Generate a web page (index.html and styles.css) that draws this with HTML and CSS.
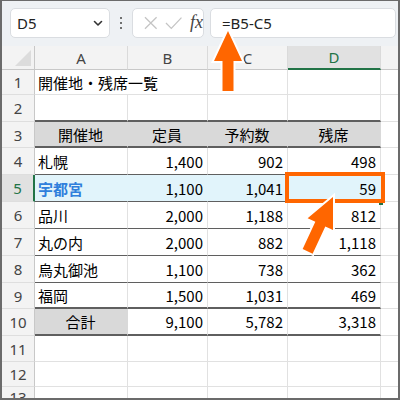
FILE: index.html
```html
<!DOCTYPE html>
<html lang="ja">
<head>
<meta charset="utf-8">
<link rel="stylesheet" href="styles.css">
</head>
<body>
<div class="frame">
  <div class="toolbar">
    <div class="namebox">
      <span class="nb-text">D5</span>
      <svg class="chev" width="10" height="7" viewBox="0 0 10 7"><path d="M1.5 1.5 L5 5 L8.5 1.5" fill="none" stroke="#333" stroke-width="1.6" stroke-linecap="round" stroke-linejoin="round"/></svg>
    </div>
    <div class="dots"><span></span><span></span><span></span></div>
    <div class="fxbox">
      <svg width="14" height="14" viewBox="0 0 14 14"><path d="M1 1 L13 13 M13 1 L1 13" stroke="#c4c4c4" stroke-width="1.3" fill="none"/></svg>
      <svg width="18" height="14" viewBox="0 0 18 14"><path d="M1 7 L6.5 12.5 L17 1.5" stroke="#c4c4c4" stroke-width="1.3" fill="none"/></svg>
      <span class="fx">fx</span>
    </div>
    <div class="formula">=B5-C5</div>
  </div>
  <div class="sheet">
    <div class="corner"><svg width="20" height="20" viewBox="0 0 20 20"><path d="M19 3 L19 19 L3 19 Z" fill="#dcdcdc"/></svg></div>
    <div class="ch">A</div><div class="ch">B</div><div class="ch">C</div><div class="ch chs">D</div><div class="ch che"></div>

    <div class="rh">1</div><div class="c span2">開催地・残席一覧</div><div class="c"></div><div class="c"></div><div class="c e"></div>
    <div class="rh">2</div><div class="c tk"></div><div class="c tk"></div><div class="c tk"></div><div class="c tk"></div><div class="c e"></div>
    <div class="rh">3</div><div class="c hd tk ctr">開催地</div><div class="c hd tk ctr">定員</div><div class="c hd tk ctr">予約数</div><div class="c hd tk ctr">残席</div><div class="c e"></div>
    <div class="rh">4</div><div class="c t">札幌</div><div class="c t r">1,400</div><div class="c t r">902</div><div class="c t r">498</div><div class="c e"></div>
    <div class="rh rhs">5</div><div class="c t sel blue">宇都宮</div><div class="c t sel r">1,100</div><div class="c t sel r">1,041</div><div class="c t sel r">59</div><div class="c e"></div>
    <div class="rh">6</div><div class="c t">品川</div><div class="c t r">2,000</div><div class="c t r">1,188</div><div class="c t r">812</div><div class="c e"></div>
    <div class="rh">7</div><div class="c t">丸の内</div><div class="c t r">2,000</div><div class="c t r">882</div><div class="c t r">1,118</div><div class="c e"></div>
    <div class="rh">8</div><div class="c t">烏丸御池</div><div class="c t r">1,100</div><div class="c t r">738</div><div class="c t r">362</div><div class="c e"></div>
    <div class="rh">9</div><div class="c tk">福岡</div><div class="c tk r">1,500</div><div class="c tk r">1,031</div><div class="c tk r">469</div><div class="c e"></div>
    <div class="rh">10</div><div class="c hd tk ctr">合計</div><div class="c tk r">9,100</div><div class="c tk r">5,782</div><div class="c tk r">3,318</div><div class="c e"></div>
    <div class="rh">11</div><div class="c"></div><div class="c"></div><div class="c"></div><div class="c"></div><div class="c e"></div>
    <div class="rh">12</div><div class="c"></div><div class="c"></div><div class="c"></div><div class="c"></div><div class="c e"></div>
    <div class="rh">13</div><div class="c"></div><div class="c"></div><div class="c"></div><div class="c"></div><div class="c e"></div>
  </div>
  <div class="handle"></div>
  <div class="selbox"></div>
  <svg class="overlay" width="400" height="400" viewBox="0 0 400 400">
    <g transform="translate(228,31)">
      <polygon class="arrow" points="0,0 14,30 5.5,30 5.5,60 -5.5,60 -5.5,30 -14,30"/>
    </g>
    <g transform="translate(333,197) rotate(25)">
      <polygon class="arrow" points="0,0 14,30 5.5,30 5.5,60 -5.5,60 -5.5,30 -14,30"/>
    </g>
  </svg>
</div>
</body>
</html>
```
FILE: styles.css
```css
* { box-sizing: border-box; }
html, body { margin: 0; padding: 0; background: #fff; }
body { font-family: "Noto Sans CJK JP", "Noto Sans", sans-serif; }

.frame {
  position: relative;
  width: 400px;
  height: 400px;
  border: 2px solid #6b6b6b;
  border-top-width: 1px;
  overflow: hidden;
  display: flex;
  flex-direction: column;
}

.toolbar {
  height: 45px;
  flex: none;
  background: #eef1f4;
  display: flex;
  align-items: flex-start;
  padding: 7px 2px 0 8px;
}
.namebox {
  width: 100px;
  height: 30px;
  background: #fff;
  border: 1px solid #dadde1;
  border-radius: 5px;
  display: flex;
  align-items: center;
  justify-content: space-between;
  padding: 0 6px 0 6px;
}
.nb-text {
  font-family: "Noto Sans", sans-serif;
  font-size: 15px;
  color: #222;
}
.chev { margin-top: 1px; }
.dots {
  width: 22px;
  height: 30px;
  display: flex;
  flex-direction: column;
  align-items: center;
  justify-content: center;
  gap: 2.5px;
}
.dots span {
  width: 2.5px;
  height: 2.5px;
  border-radius: 50%;
  background: #444;
}
.fxbox {
  width: 72px;
  height: 30px;
  background: #fff;
  border: 1px solid #dadde1;
  border-radius: 5px;
  display: flex;
  align-items: center;
  padding-left: 11px;
  gap: 7px;
}
.fx {
  font-family: "Liberation Serif", serif;
  font-style: italic;
  font-size: 18px;
  color: #444;
  margin-left: 1px;
  margin-top: -2px;
}
.formula {
  flex: 1;
  margin-left: 6px;
  height: 30px;
  background: #fff;
  border: 1px solid #dadde1;
  border-radius: 5px;
  display: flex;
  align-items: center;
  padding-left: 11px;
  font-family: "Noto Sans", sans-serif;
  font-size: 15px;
  color: #222;
}

.sheet {
  flex: 1;
  display: grid;
  grid-template-columns: 33px 93px 80px 80px 93px 1fr;
  grid-template-rows: 24px 25px 27px 26px 27px 27px 27px 27px 27px 26px 27px 26px 25px 1fr;
  font-size: 15px;
  color: #000;
}

.corner {
  background: #f3f3f3;
  border-right: 1px solid #c8c8c8;
  border-bottom: 1px solid #c8c8c8;
  display: flex;
  align-items: flex-end;
  justify-content: flex-end;
  padding: 0 2px 2px 0;
}
.ch {
  background: #f3f3f3;
  border-right: 1px solid #dadada;
  border-bottom: 1px solid #c8c8c8;
  display: flex;
  align-items: center;
  justify-content: center;
  font-family: "Noto Sans", sans-serif;
  font-size: 15px;
  color: #444;
}
.chs {
  background: #e1e1e1;
  color: #217346;
  border-bottom: 2px solid #217346;
}
.che { border-right: none; }

.rh {
  background: #f3f3f3;
  border-right: 1px solid #c8c8c8;
  border-bottom: 1px solid #dedede;
  display: flex;
  align-items: center;
  justify-content: center;
  font-family: "Noto Sans", sans-serif;
  font-size: 15px;
  color: #444;
}
.rhs {
  background: #e1e1e1;
  color: #217346;
  border-right: 2px solid #217346;
}

.c {
  border-right: 1px solid #e1e1e1;
  border-bottom: 1px solid #e1e1e1;
  display: flex;
  align-items: center;
  padding: 0 4px 0 3px;
  white-space: nowrap;
  overflow: visible;
}
.span2 { grid-column: span 2; }
.r { justify-content: flex-end; }
.ctr { justify-content: center; }
.t { border-bottom: 1px solid #5f5f5f; }
.tk { border-bottom: 2px solid #5f5f5f; }
.hd { background: #d9d9d9; border-right-color: #d9d9d9; }
.sel { background: #e1f4fb; border-right-color: #e1f4fb; }
.blue { color: #2f7fdc; font-weight: bold; }
.e { border-right: none; }

.selbox {
  position: absolute;
  left: 283px;
  top: 171px;
  width: 100px;
  height: 31px;
  border: 4px solid #ff6600;
}
.handle {
  position: absolute;
  left: 377px;
  top: 200px;
  width: 4px;
  height: 4px;
  background: #217346;
}
.overlay {
  position: absolute;
  left: -2px;
  top: -1px;
  pointer-events: none;
}
.arrow {
  fill: #ff6600;
  stroke: #fff;
  stroke-width: 4;
  stroke-linejoin: miter;
  paint-order: stroke fill;
}
```
